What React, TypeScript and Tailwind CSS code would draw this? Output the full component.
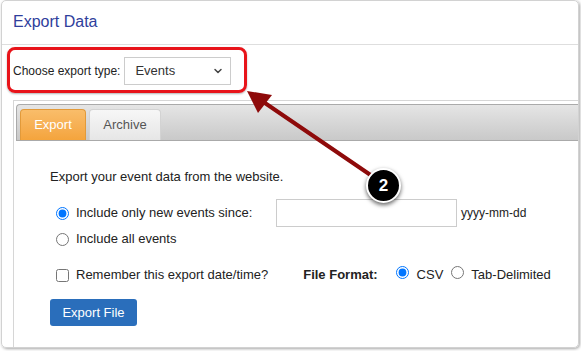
import { ChevronDown } from "lucide-react"

const font = { fontFamily: '"Liberation Sans", Arial, sans-serif' }

/* ── Small form bits ───────────────────────────────────────────────────── */
function Radio({ checked }: { checked?: boolean }) {
  return (
    <input
      type="radio"
      readOnly
      checked={!!checked}
      className="m-0 h-[13px] w-[13px] shrink-0 accent-[#0075ff]"
    />
  )
}

function Tab({ label, active }: { label: string; active?: boolean }) {
  return active ? (
    <div className="flex h-[31px] w-[66px] items-center justify-center rounded-t-[4px] border border-b-0 border-[#e29a3a] bg-gradient-to-b from-[#f9bd6a] to-[#f4a43c] text-[13px] text-white">
      {label}
    </div>
  ) : (
    <div className="flex h-[31px] w-[72px] items-center justify-center rounded-t-[4px] border border-b-0 border-[#d3d3d3] bg-gradient-to-b from-[#f7f7f7] to-[#e6e6e6] text-[13px] text-[#555]">
      {label}
    </div>
  )
}

/* ── Annotation overlay (arrow + step badge) ───────────────────────────── */
function Annotation() {
  return (
    <>
      <svg className="pointer-events-none absolute left-0 top-0" width="581" height="351">
        <line x1="372" y1="176" x2="262" y2="101" stroke="#8e0a0a" strokeWidth="4" strokeLinecap="round" />
        <polygon points="247,91 272,95 258,113" fill="#8e0a0a" />
      </svg>
      <div className="absolute left-[366px] top-[168px] flex h-[35px] w-[35px] items-center justify-center rounded-full border-2 border-white bg-black text-[17px] font-bold text-white shadow-[0_2px_4px_rgba(0,0,0,0.6)]">
        2
      </div>
    </>
  )
}

export default function App() {
  return (
    <div className="relative h-[351px] w-[581px] overflow-hidden bg-white text-[#222]" style={font}>
      <div className="ml-[1px] flex h-[348px] w-[578px] flex-col overflow-hidden rounded-[5px] border border-[#d2d2d2] shadow-[1px_1px_3px_rgba(0,0,0,0.35)]">
        {/* Header */}
        <div className="flex h-[44px] shrink-0 items-center border-b border-[#dedede] px-[11px] pb-[2px]">
          <span className="text-[16px] text-[#2f3e9c]">Export Data</span>
        </div>

        {/* Export type chooser */}
        <div className="h-[55px] shrink-0 pl-[5px] pt-[2px]">
          <div className="inline-flex items-center rounded-[8px] border-[3px] border-[#e8141a] pb-[5px] pl-[3px] pr-[13px] pt-[7px] shadow-[0_1px_2px_rgba(0,0,0,0.3)]">
            <span className="text-[12px] text-[#222]">Choose export type:</span>
            <div className="ml-[4px] flex h-[28px] w-[107px] items-center justify-between border border-[#ccc] pl-[10px] pr-[6px]">
              <span className="text-[13px] text-[#333]">Events</span>
              <ChevronDown size={12} strokeWidth={3} className="text-[#444]" />
            </div>
          </div>
        </div>

        {/* Tabs container */}
        <div className="ml-[11px] flex flex-1 flex-col border-l border-t border-[#d6d6d6] pl-[2px] pt-[3px]">
          <div className="flex h-[37px] shrink-0 items-end gap-[3px] rounded-tl-[4px] border border-r-0 border-[#aaa] bg-gradient-to-b from-[#e5e5e5] to-[#c9c9c9] px-[3px]">
            <Tab label="Export" active />
            <Tab label="Archive" />
          </div>

          <div className="flex flex-col pl-[34px] pt-[28px] text-[13px] text-[#222]">
            <p className="leading-[15px]">Export your event data from the website.</p>

            <div className="mt-[15px] flex h-[28px] items-center pl-[6px]">
              <div className="flex w-[220px] items-center gap-[7px]">
                <Radio checked />
                <span>Include only new events since:</span>
              </div>
              <div className="h-[28px] w-[181px] border border-[#ccc] bg-white" />
              <span className="ml-[4px] text-[12px]">yyyy-mm-dd</span>
            </div>

            <div className="mt-[4px] flex h-[16px] items-center gap-[7px] pl-[6px]">
              <Radio />
              <span>Include all events</span>
            </div>

            <div className="mt-[20px] flex h-[16px] items-center pl-[6px]">
              <input type="checkbox" readOnly className="m-0 h-[13px] w-[13px]" />
              <span className="ml-[7px]">Remember this export date/time?</span>
              <span className="ml-[35px] font-bold">File Format:</span>
              <span className="ml-[18px]"><Radio checked /></span>
              <span className="ml-[8px]">CSV</span>
              <span className="ml-[8px]"><Radio /></span>
              <span className="ml-[7px]">Tab-Delimited</span>
            </div>

            <div className="mt-[16px]">
              <button className="h-[27px] w-[87px] rounded-[3px] bg-[#2a6ebb] text-[13px] text-white">
                Export File
              </button>
            </div>
          </div>
        </div>
      </div>

      <Annotation />
    </div>
  )
}
